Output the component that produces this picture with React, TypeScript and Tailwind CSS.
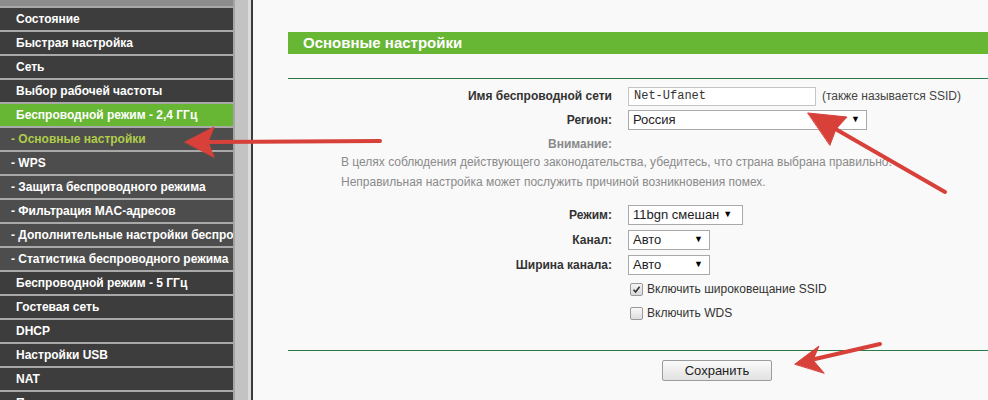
const menu: { label: string; kind: 'main' | 'sub' | 'active' | 'activeSub' }[] = [
  { label: 'Состояние', kind: 'main' },
  { label: 'Быстрая настройка', kind: 'main' },
  { label: 'Сеть', kind: 'main' },
  { label: 'Выбор рабочей частоты', kind: 'main' },
  { label: 'Беспроводной режим - 2,4 ГГц', kind: 'active' },
  { label: '- Основные настройки', kind: 'activeSub' },
  { label: '- WPS', kind: 'sub' },
  { label: '- Защита беспроводного режима', kind: 'sub' },
  { label: '- Фильтрация MAC-адресов', kind: 'sub' },
  { label: '- Дополнительные настройки беспроводного режима', kind: 'sub' },
  { label: '- Статистика беспроводного режима', kind: 'sub' },
  { label: 'Беспроводной режим - 5 ГГц', kind: 'main' },
  { label: 'Гостевая сеть', kind: 'main' },
  { label: 'DHCP', kind: 'main' },
  { label: 'Настройки USB', kind: 'main' },
  { label: 'NAT', kind: 'main' },
  { label: 'Переадресация', kind: 'main' },
];

const rowStyle = {
  main: 'bg-[#3d3d3d] text-white pl-[16px]',
  sub: 'bg-[#4d4d4d] text-white pl-[11px]',
  active: 'bg-[#67b634] text-white pl-[16px]',
  activeSub: 'bg-[#4d4d4d] text-[#afcd4b] pl-[11px]',
};

function Select({ value, width }: { value: string; width: string }) {
  return (
    <div className={`${width} h-[20px] bg-white border border-[#a9a9a9] flex items-center justify-between pl-[4px] pr-[6px] text-[13px] text-[#222]`}>
      <span>{value}</span>
      <span className="text-[9px] text-black">▼</span>
    </div>
  );
}

function Label({ children, muted }: { children: React.ReactNode; muted?: boolean }) {
  return (
    <div className={`w-[324px] pr-[0px] text-right text-[12px] font-bold ${muted ? 'text-[#8a8a8a]' : 'text-[#333]'}`}>
      {children}
    </div>
  );
}

export default function App() {
  return (
    <div className="relative w-[988px] h-[400px] overflow-hidden flex bg-[#f9f9f9] font-['Liberation_Sans',Arial,sans-serif]">
      {/* Sidebar */}
      <div className="w-[233px] shrink-0 flex flex-col bg-[#3d3d3d]">
        <div className="h-[8px] bg-[#8c8c8c] border-b-2 border-[#a9a9a9] shrink-0" />
        {menu.map((item) => (
          <div
            key={item.label}
            className={`h-[24px] shrink-0 border-b-2 border-[#a9a9a9] text-[12px] font-bold leading-[22px] whitespace-nowrap overflow-hidden ${rowStyle[item.kind]}`}
          >
            {item.label}
          </div>
        ))}
      </div>
      {/* Scrollbar */}
      <div className="w-[15px] shrink-0 bg-[#c3c3c3] border-l-2 border-[#a5a5a5]" />
      <div className="w-[3px] shrink-0 bg-[#dcdcdc]" />
      <div className="w-[2px] shrink-0 bg-[#3a3a3a]" />

      {/* Content */}
      <div className="flex-1 pl-[35px] pt-[32px] flex flex-col">
        <div className="h-[22px] bg-[#67b634] pl-[15px] text-white text-[15px] font-bold leading-[22px]">
          Основные настройки
        </div>
        <div className="mt-[24px] h-px bg-[#2b7a46]" />

        <div className="mt-[7px] flex items-center h-[20px]">
          <Label>Имя беспроводной сети</Label>
          <div className="ml-[16px] w-[188px] h-[19px] bg-white border border-[#c4c4c4] pl-[5px] text-[12px] leading-[17px] text-[#333] font-['Liberation_Mono','Courier_New',monospace]">
            Net-Ufanet
          </div>
          <span className="ml-[6px] text-[12px] text-[#444]">(также называется SSID)</span>
        </div>

        <div className="mt-[4px] flex items-center h-[20px]">
          <Label>Регион:</Label>
          <div className="ml-[16px]">
            <Select value="Россия" width="w-[239px]" />
          </div>
        </div>

        <div className="mt-[6px] flex items-center h-[16px]">
          <Label muted>Внимание:</Label>
        </div>

        <div className="pl-[53px] text-[12px] leading-[20px] text-[#8a8a8a]">
          <div>В целях соблюдения действующего законодательства, убедитесь, что страна выбрана правильно.</div>
          <div>Неправильная настройка может послужить причиной возникновения помех.</div>
        </div>

        <div className="mt-[13px] flex items-center h-[20px]">
          <Label>Режим:</Label>
          <div className="ml-[16px]">
            <div className="w-[115px] h-[20px] bg-white border border-[#a9a9a9] flex items-center pl-[4px] gap-[4px] text-[13px] text-[#222]">
              <span>11bgn смешан</span>
              <span className="text-[9px] text-black">▼</span>
            </div>
          </div>
        </div>

        <div className="mt-[5px] flex items-center h-[20px]">
          <Label>Канал:</Label>
          <div className="ml-[16px]">
            <Select value="Авто" width="w-[82px]" />
          </div>
        </div>

        <div className="mt-[5px] flex items-center h-[20px]">
          <Label>Ширина канала:</Label>
          <div className="ml-[16px]">
            <Select value="Авто" width="w-[82px]" />
          </div>
        </div>

        <div className="mt-[5px] flex items-center h-[18px] pl-[342px] gap-[4px] text-[12px] text-[#333]">
          <span className="w-[13px] h-[13px] rounded-[2px] border border-[#9a9a9a] bg-gradient-to-b from-[#f4f4f4] to-[#d8d8d8] flex items-center justify-center">
            <svg width="9" height="9" viewBox="0 0 9 9">
              <path d="M1.5 4.8 L3.6 7 L7.6 1.8" fill="none" stroke="#333" strokeWidth="1.6" />
            </svg>
          </span>
          <span>Включить широковещание SSID</span>
        </div>

        <div className="mt-[6px] flex items-center h-[18px] pl-[342px] gap-[4px] text-[12px] text-[#333]">
          <span className="w-[13px] h-[13px] rounded-[2px] border border-[#9a9a9a] bg-gradient-to-b from-[#f8f8f8] to-[#dedede]" />
          <span>Включить WDS</span>
        </div>

        <div className="mt-[28px] h-px bg-[#2b7a46]" />

        <div className="mt-[9px] pl-[374px]">
          <div className="w-[110px] h-[21px] rounded-[2px] border border-[#9c9c9c] bg-gradient-to-b from-[#fafafa] to-[#e2e2e2] flex items-center justify-center text-[13px] text-[#222]">
            Сохранить
          </div>
        </div>
      </div>

      {/* Red annotation arrows */}
      <svg className="absolute inset-0 pointer-events-none" width="988" height="400" viewBox="0 0 988 400">
        <g fill="#d8403a" stroke="#d8403a" strokeLinecap="round">
          <line x1="380" y1="141" x2="205" y2="142" strokeWidth="4" />
          <polygon points="185,142 214,127 208,142 214,157" strokeWidth="1" strokeLinejoin="round" />
          <line x1="945" y1="192" x2="832" y2="127" strokeWidth="4" />
          <polygon points="808,113 847,117 836,129 830,145" strokeWidth="1" strokeLinejoin="round" />
          <line x1="880" y1="344" x2="815" y2="359" strokeWidth="4" />
          <polygon points="795,364 819,346 813,360 824,373" strokeWidth="1" strokeLinejoin="round" />
        </g>
      </svg>
    </div>
  );
}
